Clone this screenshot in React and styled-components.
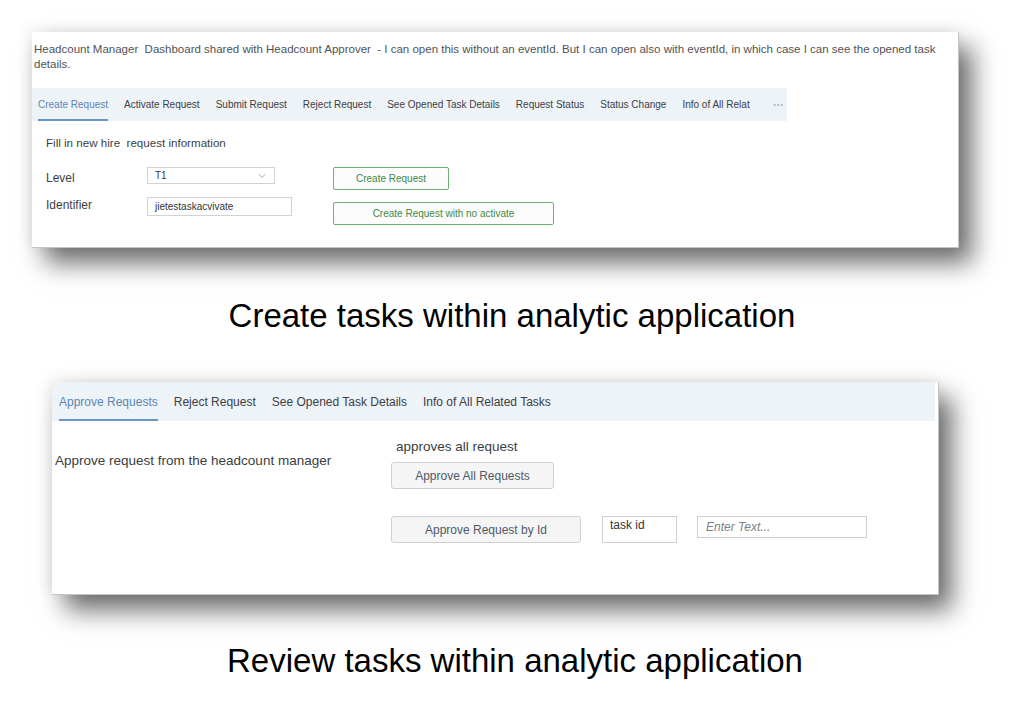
import styled, { createGlobalStyle } from 'styled-components'
import { ChevronDown, Ellipsis } from 'lucide-react'

const GlobalStyle = createGlobalStyle`
  html, body {
    margin: 0;
    background: #ffffff;
    font-family: "Liberation Sans", Arial, sans-serif;
  }
  * { box-sizing: border-box; }
`

const App = () => {
  return (
    <Page>
      <GlobalStyle />

      <Card $left={32} $width={927} $height={216}>
        <Intro>
          Headcount Manager&nbsp; Dashboard shared with Headcount Approver&nbsp; - I can open this without an eventId. But I can open also with eventId, in which case I can see the opened task details.
        </Intro>

        <TabBar $width="755px" $height={33} $pad={6} $gap={16} $size={10}>
          <Tab $active>Create Request</Tab>
          <Tab>Activate Request</Tab>
          <Tab>Submit Request</Tab>
          <Tab>Reject Request</Tab>
          <Tab>See Opened Task Details</Tab>
          <Tab>Request Status</Tab>
          <Tab>Status Change</Tab>
          <Tab>Info of All Relat</Tab>
          <More><Ellipsis size={12} strokeWidth={2} /></More>
        </TabBar>

        <FormTitle>Fill in new hire  request information</FormTitle>

        <Form>
          <FieldGrid>
            <Label>Level</Label>
            <Select>
              T1
              <ChevronDown size={12} strokeWidth={1.5} color="#8a8f96" />
            </Select>
            <Label $up>Identifier</Label>
            <TextBox>jietestaskacvivate</TextBox>
          </FieldGrid>
          <ButtonCol>
            <GreenButton $w={116}>Create Request</GreenButton>
            <GreenButton $w={221}>Create Request with no activate</GreenButton>
          </ButtonCol>
        </Form>
      </Card>

      <Caption>Create tasks within analytic application</Caption>

      <Card $left={52} $width={887} $height={213}>
        <TabBar $width="calc(100% - 3px)" $height={39} $pad={7} $gap={16} $size={12}>
          <Tab $active>Approve Requests</Tab>
          <Tab>Reject Request</Tab>
          <Tab>See Opened Task Details</Tab>
          <Tab>Info of All Related Tasks</Tab>
        </TabBar>

        <ApproveBody>
          <Lead>Approve request from the headcount manager</Lead>
          <Actions>
            <Note>approves all request</Note>
            <GreyButton $w={163}>Approve All Requests</GreyButton>
            <IdRow>
              <GreyButton $w={190}>Approve Request by Id</GreyButton>
              <TaskId>task id</TaskId>
              <EnterText>Enter Text...</EnterText>
            </IdRow>
          </Actions>
        </ApproveBody>
      </Card>

      <Caption $shift={6}>Review tasks within analytic application</Caption>
    </Page>
  )
}

export default App


const Page = styled.div`
  width: 1024px;
  height: 701px;
  overflow: hidden;
  padding-top: 32px;
  display: flex;
  flex-direction: column;
`

const Card = styled.div`
  margin-left: ${p => p.$left}px;
  width: ${p => p.$width}px;
  height: ${p => p.$height}px;
  flex-shrink: 0;
  background: #ffffff;
  border-right: 1px solid #c4c4c4;
  border-bottom: 1px solid #c4c4c4;
  box-shadow: 13px 15px 24px rgba(0, 0, 0, 0.58), -3px -3px 14px rgba(0, 0, 0, 0.07);
  display: flex;
  flex-direction: column;
`

const Intro = styled.div`
  padding: 10px 12px 0 2px;
  font-size: 11.5px;
  line-height: 15px;
  color: #4f5357;
`

const TabBar = styled.div`
  width: ${p => p.$width};
  height: ${p => p.$height}px;
  margin-top: ${p => (p.$size === 10 ? 16 : 0)}px;
  padding-left: ${p => p.$pad}px;
  background: #eef3f8;
  display: flex;
  align-items: stretch;
  gap: ${p => p.$gap}px;
  font-size: ${p => p.$size}px;
  flex-shrink: 0;
`

const Tab = styled.div`
  display: flex;
  align-items: center;
  white-space: nowrap;
  border-top: 2px solid transparent;
  border-bottom: 2px solid ${p => (p.$active ? '#6a94c4' : 'transparent')};
  color: ${p => (p.$active ? '#5b86b6' : '#3b4046')};
`

const More = styled.div`
  display: flex;
  align-items: center;
  margin-left: 6px;
  color: #9aa9bc;
`

const FormTitle = styled.div`
  margin: 14px 0 0 14px;
  font-size: 11.6px;
  line-height: 15px;
  white-space: pre;
  color: #3b3f44;
`

const Form = styled.div`
  display: flex;
  align-items: flex-start;
  margin: 17px 0 0 14px;
`

const FieldGrid = styled.div`
  display: grid;
  grid-template-columns: 101px 186px;
  row-gap: 10px;
  align-items: start;
`

const Label = styled.div`
  font-size: 12px;
  line-height: 17px;
  padding-top: ${p => (p.$up ? 0 : 3)}px;
  color: #3b3f44;
`

const Select = styled.div`
  width: 128px;
  height: 17px;
  border: 1px solid #cfd3d6;
  padding: 0 6px 0 7px;
  display: flex;
  align-items: center;
  justify-content: space-between;
  font-size: 10px;
  color: #333;
`

const TextBox = styled.div`
  width: 145px;
  height: 19px;
  border: 1px solid #cfd3d6;
  padding-left: 7px;
  display: flex;
  align-items: center;
  font-size: 10px;
  color: #333;
`

const ButtonCol = styled.div`
  display: flex;
  flex-direction: column;
  gap: 12px;
`

const GreenButton = styled.button`
  width: ${p => p.$w}px;
  height: 23px;
  border: 1px solid #6fae72;
  border-radius: 2px;
  background: #fbfcfb;
  color: #438846;
  font-family: "Liberation Sans", Arial, sans-serif;
  font-size: 10px;
  padding: 0;
`

const ApproveBody = styled.div`
  display: grid;
  grid-template-columns: 336px auto;
  padding-left: 3px;
`

const Lead = styled.div`
  margin-top: 32px;
  font-size: 13.5px;
  line-height: 16px;
  color: #3a3d41;
`

const Actions = styled.div`
  display: flex;
  flex-direction: column;
  align-items: flex-start;
  padding-top: 18px;
`

const Note = styled.div`
  padding-left: 5px;
  font-size: 13.5px;
  line-height: 16px;
  color: #3a3d41;
`

const GreyButton = styled.button`
  width: ${p => p.$w}px;
  height: 27px;
  margin-top: 7px;
  border: 1px solid #d0d0d0;
  border-radius: 3px;
  background: #f5f5f5;
  color: #4d5a68;
  font-family: "Liberation Sans", Arial, sans-serif;
  font-size: 12px;
  padding: 0;
`

const IdRow = styled.div`
  display: flex;
  align-items: flex-start;
  gap: 20px;
  margin-top: 20px;

  & > button { margin-right: 1px; }
`

const TaskId = styled.div`
  width: 75px;
  height: 27px;
  margin-top: 7px;
  border: 1px solid #cfcfcf;
  padding: 1px 0 0 7px;
  font-size: 12px;
  color: #333;
`

const EnterText = styled.div`
  width: 170px;
  height: 22px;
  margin-top: 7px;
  border: 1px solid #cfcfcf;
  padding-left: 8px;
  display: flex;
  align-items: center;
  font-size: 12px;
  font-style: italic;
  color: #7a7f85;
`

const Caption = styled.div`
  flex-shrink: 0;
  margin-top: ${p => (p.$shift ? 47 : 49)}px;
  margin-bottom: 47px;
  padding-left: ${p => p.$shift || 0}px;
  text-align: center;
  font-size: 33px;
  line-height: 38px;
  color: #000;
`
